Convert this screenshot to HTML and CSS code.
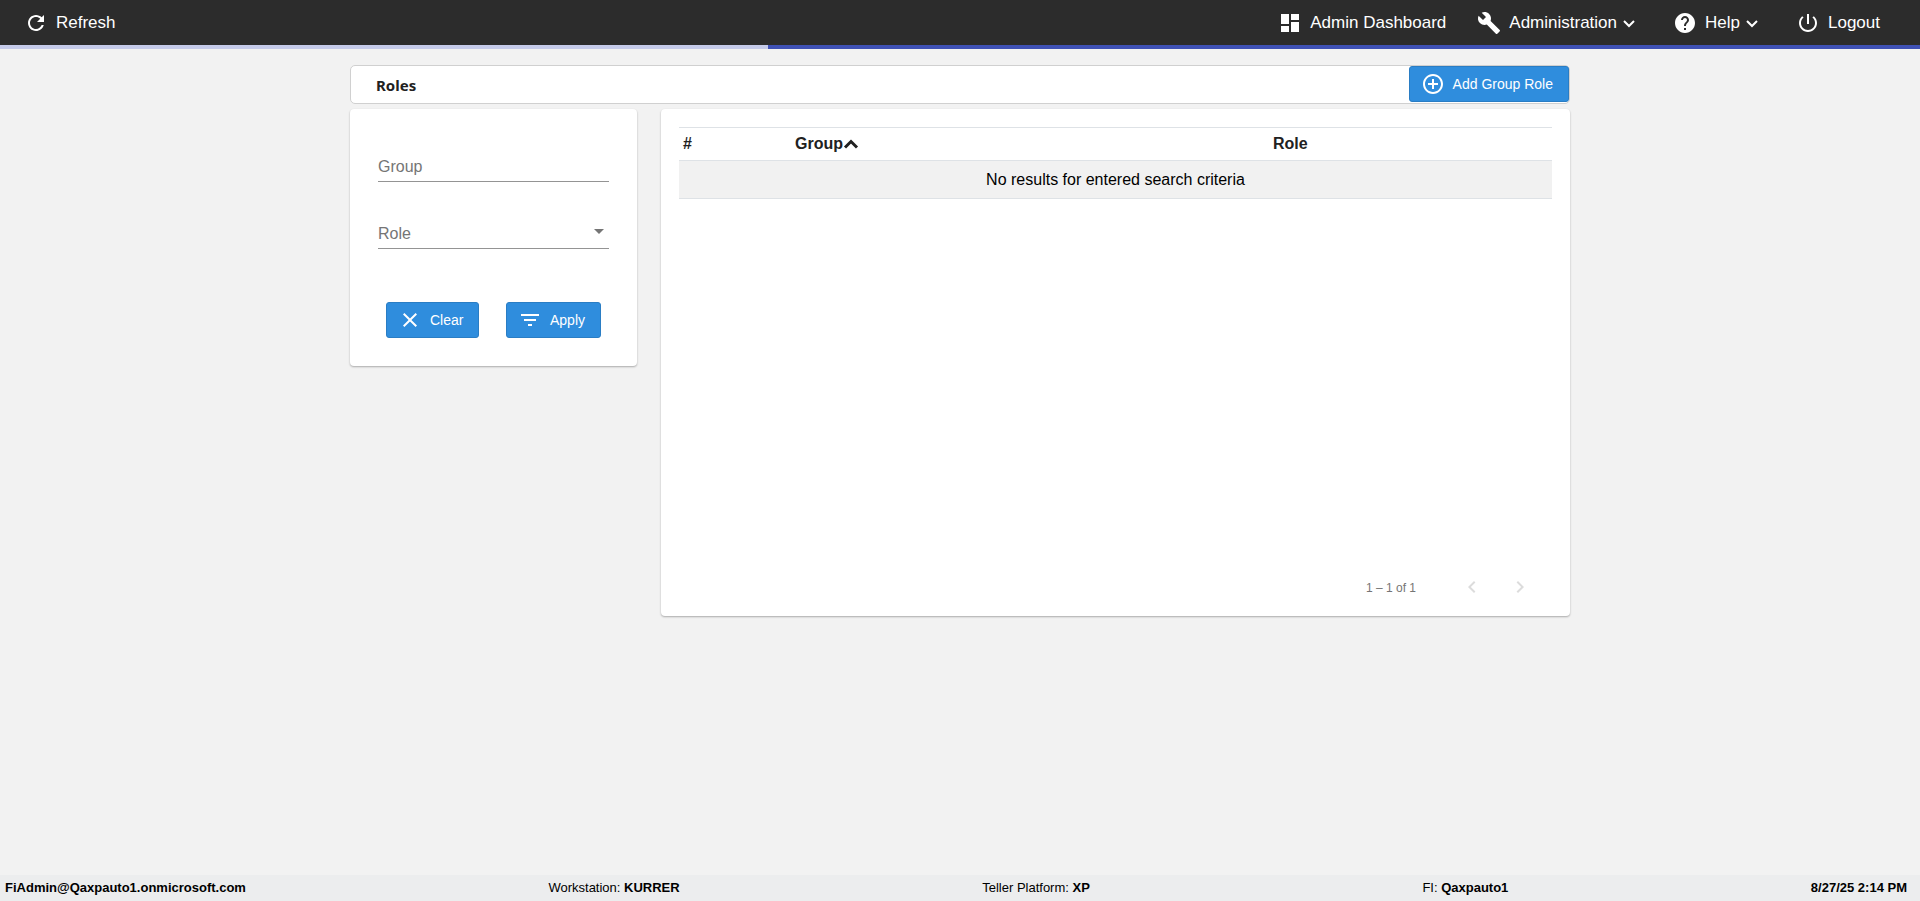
FILE: index.html
```html
<!DOCTYPE html>
<html lang="en">
<head>
    <meta charset="UTF-8">
    <meta name="viewport" content="width=device-width, initial-scale=1.0">
    <title>Roles</title>
    <link rel="stylesheet" href="styles.css">
</head>
<body>
    <header class="topbar">
        <button type="button" class="nav-item">
            <svg class="icon" viewBox="0 0 24 24"><path d="M17.65 6.35C16.2 4.9 14.21 4 12 4c-4.42 0-7.99 3.58-7.99 8s3.57 8 7.99 8c3.73 0 6.84-2.55 7.73-6h-2.08c-.82 2.33-3.04 4-5.65 4-3.31 0-6-2.69-6-6s2.69-6 6-6c1.66 0 3.14.69 4.22 1.78L13 11h7V4l-2.35 2.35z"/></svg>
            <span>Refresh</span>
        </button>
        <nav class="nav">
            <button type="button" class="nav-item">
                <svg class="icon" viewBox="0 0 24 24"><path d="M3 13h8V3H3v10zm0 8h8v-6H3v6zm10 0h8V11h-8v10zm0-18v6h8V3h-8z"/></svg>
                <span>Admin Dashboard</span>
            </button>
            <button type="button" class="nav-item">
                <svg class="icon" viewBox="0 0 24 24"><path d="M22.7 19l-9.1-9.1c.9-2.3.4-5-1.5-6.9-2-2-5-2.4-7.4-1.3L9 6 6 9 1.6 4.7C.4 7.1.9 10.1 2.9 12.1c1.9 1.9 4.6 2.4 6.9 1.5l9.1 9.1c.4.4 1 .4 1.4 0l2.3-2.3c.5-.4.5-1.1.1-1.4z"/></svg>
                <span>Administration</span>
                <svg class="caret" viewBox="0 0 12 8"><path d="M1 1l5 5 5-5"/></svg>
            </button>
            <button type="button" class="nav-item">
                <svg class="icon" viewBox="0 0 24 24"><path d="M12 2C6.480 2 2 6.480 2 12s4.480 10 10 10 10-4.480 10-10S17.520 2 12 2zm1 17h-2v-2h2v2zm2.070-7.750l-.9.920C13.450 12.900 13 13.500 13 15h-2v-.5c0-1.100.450-2.100 1.170-2.830l1.240-1.260c.370-.360.590-.860.590-1.410 0-1.100-.9-2-2-2s-2 .9-2 2H8c0-2.210 1.790-4 4-4s4 1.790 4 4c0 .880-.360 1.680-.930 2.250z"/></svg>
                <span>Help</span>
                <svg class="caret" viewBox="0 0 12 8"><path d="M1 1l5 5 5-5"/></svg>
            </button>
            <button type="button" class="nav-item">
                <svg class="icon" viewBox="0 0 24 24"><path d="M13 3h-2v10h2V3zm4.830 2.170l-1.420 1.420C17.990 7.860 19 9.810 19 12c0 3.870-3.130 7-7 7s-7-3.130-7-7c0-2.190 1.010-4.140 2.580-5.420L6.170 5.170C4.230 6.820 3 9.260 3 12c0 4.970 4.030 9 9 9s9-4.030 9-9c0-2.740-1.230-5.180-3.170-6.830z"/></svg>
                <span>Logout</span>
            </button>
        </nav>
    </header>
    <div class="progress"><div class="progress-buffer" style="width: 40%"></div></div>

    <main class="page">
        <div class="title-bar">
            <h1>Roles</h1>
            <button type="button" class="btn">
                <svg class="icon" viewBox="0 0 24 24"><path d="M13 7h-2v4H7v2h4v4h2v-4h4v-2h-4V7zm-1-5C6.480 2 2 6.480 2 12s4.480 10 10 10 10-4.480 10-10S17.520 2 12 2zm0 18c-4.410 0-8-3.590-8-8s3.590-8 8-8 8 3.590 8 8-3.590 8-8 8z"/></svg>
                <span>Add Group Role</span>
            </button>
        </div>

        <div class="columns">
            <form class="card filter" onsubmit="return false">
                <div class="field">
                    <input type="text" id="group">
                    <label for="group">Group</label>
                </div>
                <div class="field">
                    <select id="role">
                        <option value=""></option>
                    </select>
                    <label for="role">Role</label>
                    <svg class="arrow" viewBox="0 0 10 5"><path d="M0 0h10L5 5z"/></svg>
                </div>
                <div class="actions">
                    <button type="reset" class="btn">
                        <svg class="icon" viewBox="0 0 24 24"><path d="M19 6.410L17.590 5 12 10.590 6.410 5 5 6.410 10.590 12 5 17.590 6.410 19 12 13.410 17.590 19 19 17.590 13.410 12z"/></svg>
                        <span>Clear</span>
                    </button>
                    <button type="submit" class="btn">
                        <svg class="icon" viewBox="0 0 24 24"><path d="M10 18h4v-2h-4v2zM3 6v2h18V6H3zm3 7h12v-2H6v2z"/></svg>
                        <span>Apply</span>
                    </button>
                </div>
            </form>

            <section class="card results">
                <table class="table">
                    <thead>
                        <tr>
                            <th class="col-num">#</th>
                            <th class="col-group">Group<svg class="sort" viewBox="0 0 16 10"><path d="M2 8.500l6-6 6 6"/></svg></th>
                            <th>Role</th>
                        </tr>
                    </thead>
                    <tbody>
                        <tr>
                            <td colspan="3">No results for entered search criteria</td>
                        </tr>
                    </tbody>
                </table>
                <div class="pager">
                    <span class="pager-label">1 – 1 of 1</span>
                    <button type="button" class="pager-btn" aria-label="Previous page" disabled>
                        <svg viewBox="0 0 24 24"><path d="M15.410 7.410L14 6l-6 6 6 6 1.410-1.410L10.830 12z"/></svg>
                    </button>
                    <button type="button" class="pager-btn" aria-label="Next page" disabled>
                        <svg viewBox="0 0 24 24"><path d="M10 6L8.590 7.410 13.170 12l-4.580 4.590L10 18l6-6z"/></svg>
                    </button>
                </div>
            </section>
        </div>
    </main>

    <footer class="status">
        <b>FiAdmin@Qaxpauto1.onmicrosoft.com</b>
        <span>Workstation: <b>KURRER</b></span>
        <span class="status-platform">Teller Platform: <b>XP</b></span>
        <span>FI: <b>Qaxpauto1</b></span>
        <b>8/27/25 2:14 PM</b>
    </footer>
</body>
</html>
```
FILE: styles.css
```css
* {
    box-sizing: border-box;
}
body {
    margin: 0;
    min-height: 100vh;
    display: flex;
    flex-direction: column;
    background-color: #f2f2f2;
    color: #212121;
    font-family: "Liberation Sans", Arial, sans-serif;
    font-size: 16px;
}
button, input, select {
    font-family: inherit;
}
button {
    cursor: pointer;
}
.icon {
    width: 24px;
    height: 24px;
    fill: currentColor;
}

/* Top bar */
.topbar {
    display: flex;
    justify-content: space-between;
    height: 45px;
    padding: 0 40px 0 24px;
    background-color: #2c2c2c;
}
.nav {
    display: flex;
    gap: 31px;
}
.nav-item {
    display: flex;
    align-items: center;
    gap: 8px;
    padding: 0;
    border: none;
    background: none;
    color: white;
    font-size: 17px;
}
.caret {
    width: 12px;
    height: 8px;
    margin: 2px 7px 0 -2px;
    overflow: visible;
    fill: none;
    stroke: currentColor;
    stroke-width: 2;
}
.progress {
    height: 4px;
    background-color: #3f51b5;
}
.progress-buffer {
    height: 4px;
    background-color: #c5cae9;
}

/* Content */
.page {
    flex: 1;
    width: 100%;
    max-width: 1220px;
    margin: 0 auto;
    padding: 16px 0;
}
.title-bar {
    display: flex;
    justify-content: space-between;
    align-items: flex-start;
    height: 39px;
    margin-bottom: 5px;
    padding-left: 25px;
    border: 1px solid #d0d0d0;
    border-radius: 5px;
    background-color: white;
}
.title-bar h1 {
    margin: 0;
    font-family: "Noto Sans", sans-serif;
    font-size: 15px;
    line-height: 39px;
}
.btn {
    display: flex;
    align-items: center;
    gap: 8px;
    height: 36px;
    padding: 0 15px 0 11px;
    border: 1px solid #2a7dc4;
    border-radius: 3px;
    background-color: #2f8ddd;
    color: white;
    font-size: 14px;
}
.columns {
    display: flex;
    align-items: flex-start;
    gap: 24px;
}
.card {
    border-radius: 4px;
    background-color: white;
    box-shadow: 0 1px 2px rgba(0, 0, 0, 0.3);
}
.filter {
    width: 287px;
    padding: 44px 28px 28px;
}
.field {
    position: relative;
    height: 29px;
    margin-bottom: 38px;
}
.field input, .field select {
    width: 100%;
    height: 29px;
    padding: 0;
    border: none;
    border-bottom: 1px solid #949494;
    border-radius: 0;
    outline: none;
    background: none;
    font-size: 16px;
    appearance: none;
}
.field label {
    position: absolute;
    left: 0;
    top: 5px;
    color: #757575;
    line-height: 18px;
    pointer-events: none;
}
.arrow {
    position: absolute;
    right: 5px;
    top: 9px;
    width: 10px;
    height: 5px;
    fill: #757575;
    pointer-events: none;
}
.actions {
    display: flex;
    justify-content: space-between;
    padding: 15px 8px 0;
}
.results {
    flex: 1;
    padding: 18px 18px 9px;
}
.table {
    width: 100%;
    border-collapse: collapse;
    table-layout: fixed;
}
.table th {
    height: 33px;
    padding: 0 4px;
    border-top: 1px solid #dee2e6;
    border-bottom: 1px solid #dee2e6;
    text-align: left;
}
.table td {
    height: 38px;
    padding: 0;
    border-bottom: 1px solid #dee2e6;
    background-color: #f1f1f1;
    color: black;
    text-align: center;
}
.col-num {
    width: 112px;
}
.col-group {
    width: 478px;
}
.sort {
    width: 16px;
    height: 10px;
    overflow: visible;
    fill: none;
    stroke: currentColor;
    stroke-width: 3;
}
.pager {
    display: flex;
    align-items: center;
    justify-content: flex-end;
    gap: 8px;
    margin-top: 368px;
    padding-right: 12px;
    color: #757575;
    font-size: 12px;
}
.pager-label {
    margin-right: 28px;
    padding-top: 2px;
}
.pager-btn {
    width: 40px;
    height: 40px;
    padding: 8px;
    border: none;
    background: none;
}
.pager-btn svg {
    display: block;
    width: 24px;
    height: 24px;
    fill: #dcdcdc;
}

/* Status bar */
.status {
    display: flex;
    justify-content: space-between;
    align-items: center;
    height: 26px;
    padding: 0 13px 2px 5px;
    background-color: #ecedee;
    color: black;
    font-size: 13px;
}
.status-platform {
    padding-right: 30px;
}
```
